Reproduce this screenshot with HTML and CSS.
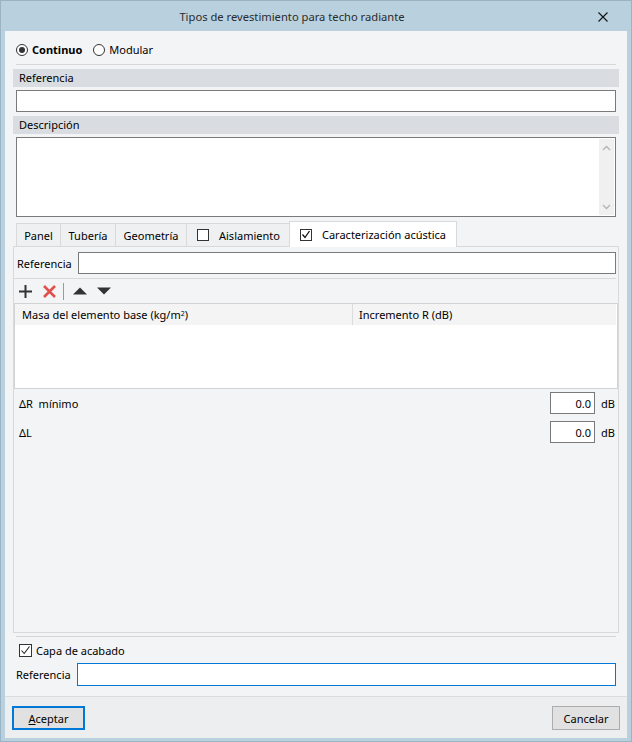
FILE: index.html
```html
<!DOCTYPE html>
<html lang="es">
<head>
<meta charset="utf-8">
<title>Tipos de revestimiento para techo radiante</title>
<link rel="stylesheet" href="styles.css">
</head>
<body>
<div class="window">
  <div class="titlebar">
    <div class="title">Tipos de revestimiento para techo radiante</div>
    <div class="close">
      <svg width="10" height="10" viewBox="0 0 10 10"><path d="M0.5 0.5L9.5 9.5M9.5 0.5L0.5 9.5" stroke="#111" stroke-width="1.1" fill="none"/></svg>
    </div>
  </div>
  <div class="content">
    <div class="main">
      <div class="radios">
        <div class="radio"><span class="radio-circle on"></span><b>Continuo</b></div>
        <div class="radio"><span class="radio-circle"></span>Modular</div>
      </div>
      <div class="sep sep-top"></div>
      <div class="band">Referencia</div>
      <div class="field field-wide"></div>
      <div class="band">Descripción</div>
      <div class="textarea">
        <div class="vscroll">
          <svg width="9" height="6" viewBox="0 0 9 6"><path d="M1 5L4.5 1.5L8 5" stroke="#b3b3b3" stroke-width="1.3" fill="none"/></svg>
          <svg width="9" height="6" viewBox="0 0 9 6"><path d="M1 1L4.5 4.5L8 1" stroke="#b3b3b3" stroke-width="1.3" fill="none"/></svg>
        </div>
      </div>
      <div class="tabs">
        <div class="tab t-panel">Panel</div>
        <div class="tab t-tuberia">Tubería</div>
        <div class="tab t-geom">Geometría</div>
        <div class="tab t-aisl"><span class="cb cb-small"></span>Aislamiento</div>
        <div class="tab active t-acus"><span class="cb cb-small">
          <svg width="10" height="10" viewBox="0 0 10 10"><path d="M1.5 4.5L4 7.5L8.5 1" stroke="#111" stroke-width="1.3" fill="none"/></svg>
        </span>Caracterización acústica</div>
      </div>
      <div class="panel">
        <div class="ref-row">
          <span class="ref-label">Referencia</span>
          <div class="field field-flex"></div>
        </div>
        <div class="sep sep-panel"></div>
        <div class="toolbar">
          <svg class="ic ic-plus" width="15" height="15" viewBox="0 0 15 15"><path d="M7.5 1V14M1 7.5H14" stroke="#333" stroke-width="2" fill="none"/></svg>
          <svg class="ic ic-del" width="15" height="15" viewBox="0 0 15 15"><path d="M2 2L13 13M13 2L2 13" stroke="#e0504d" stroke-width="2.6" fill="none"/></svg>
          <span class="tb-sep"></span>
          <svg class="ic ic-up" width="14" height="8" viewBox="0 0 14 8"><path d="M0 7.5L7 0.5L14 7.5Z" fill="#333"/></svg>
          <svg class="ic ic-down" width="14" height="8" viewBox="0 0 14 8"><path d="M0 0.5L7 7.5L14 0.5Z" fill="#333"/></svg>
        </div>
        <div class="grid">
          <div class="grid-head">
            <div class="col col-1">Masa del elemento base (kg/m<sup>2</sup>)</div>
            <div class="col col-2">Incremento R (dB)</div>
          </div>
        </div>
        <div class="val-row">
          <span class="val-label">ΔR&nbsp;&nbsp;mínimo</span>
          <div class="field field-num">0.0</div>
          <span class="unit">dB</span>
        </div>
        <div class="val-row val-row-2">
          <span class="val-label">ΔL</span>
          <div class="field field-num">0.0</div>
          <span class="unit">dB</span>
        </div>
      </div>
      <div class="sep sep-bottom"></div>
      <div class="check-row">
        <span class="cb cb-large">
          <svg width="11" height="11" viewBox="0 0 11 11"><path d="M1.5 5.5L4.2 8.5L9.5 1.5" stroke="#222" stroke-width="1.1" fill="none"/></svg>
        </span>Capa de acabado
      </div>
      <div class="ref-row ref-row-bottom">
        <span class="ref-label">Referencia</span>
        <div class="field field-flex field-focus"></div>
      </div>
    </div>
    <div class="footer">
      <div class="btn btn-default"><u>A</u>ceptar</div>
      <div class="btn">Cancelar</div>
    </div>
  </div>
</div>
</body>
</html>
```
FILE: styles.css
```css
html, body {
  margin: 0;
  padding: 0;
}
body {
  font-family: "Noto Sans", "Open Sans", sans-serif;
  font-size: 11px;
  color: #000;
}
.window {
  width: 632px;
  height: 742px;
  box-sizing: border-box;
  background: #b9d1de;
  border: 1px solid #9ab4c3;
  padding: 0 4px 3px 4px;
  display: flex;
  flex-direction: column;
}
.titlebar {
  height: 30px;
  display: flex;
  align-items: center;
  margin: 0 -4px;
}
.title {
  flex: 1;
  text-align: center;
  font-size: 11.2px;
  color: #2b2b2b;
  padding-top: 1px;
  padding-right: 2px;
}
.close {
  width: 36px;
  margin-right: 10px;
  display: flex;
  justify-content: center;
  align-items: center;
  padding-top: 2px;
}
.content {
  flex: 1;
  background: #f3f4f6;
  display: flex;
  flex-direction: column;
}
.main {
  flex: 1;
  display: flex;
  flex-direction: column;
}
.radios {
  display: flex;
  align-items: center;
  height: 17px;
  padding-top: 10px;
  padding-left: 11px;
  gap: 11px;
}
.radio {
  display: flex;
  align-items: center;
  gap: 4px;
}
.radio b {
  font-weight: 700;
}
.radio-circle {
  width: 10px;
  height: 10px;
  border: 1px solid #333;
  border-radius: 50%;
  background: #fff;
  display: flex;
  align-items: center;
  justify-content: center;
}
.radio-circle.on::after {
  content: "";
  width: 6px;
  height: 6px;
  border-radius: 50%;
  background: #333;
}
.sep {
  height: 1px;
  background: #d4d6d9;
}
.sep-top {
  margin: 6px 11px 0;
}
.band {
  margin: 4px 8px 0;
  height: 18px;
  line-height: 18px;
  background: #d9dde1;
  padding-left: 6px;
}
.field {
  box-sizing: border-box;
  background: #fff;
  border: 1px solid #7a7a7a;
}
.field-wide {
  margin: 3px 11px 0;
  height: 22px;
}
.textarea {
  margin: 3px 11px 0;
  height: 80px;
  box-sizing: border-box;
  background: #fff;
  border: 1px solid #7a7a7a;
  display: flex;
  justify-content: flex-end;
  padding: 1px;
}
.vscroll {
  width: 15px;
  background: #f0f0f0;
  display: flex;
  flex-direction: column;
  justify-content: space-between;
  align-items: center;
  padding: 6px 0 5px;
}
.tabs {
  display: flex;
  align-items: flex-end;
  height: 25px;
  margin: 4px 0 0 11px;
  position: relative;
  z-index: 1;
}
.tab {
  box-sizing: border-box;
  height: 23px;
  border: 1px solid #d9d9d9;
  border-bottom: none;
  background: #eef0f2;
  display: flex;
  align-items: center;
  justify-content: center;
  margin-right: -1px;
}
.t-panel { width: 45px; }
.t-tuberia { width: 56px; }
.t-geom { width: 72px; }
.t-aisl { width: 104px; justify-content: flex-start; padding-left: 10px; }
.t-acus { width: 168px; justify-content: flex-start; padding-left: 10px; }
.tab.active {
  height: 26px;
  background: #fff;
  margin-bottom: -1px;
}
.cb {
  box-sizing: border-box;
  border: 1px solid #333;
  background: #fff;
  display: inline-flex;
  align-items: center;
  justify-content: center;
}
.cb-small {
  width: 12px;
  height: 12px;
  margin-right: 10px;
}
.cb-large {
  width: 13px;
  height: 13px;
  margin-right: 4px;
}
.panel {
  margin: 0 8px;
  height: 387px;
  box-sizing: border-box;
  border: 1px solid #d9d9d9;
  background: #f3f4f6;
  display: flex;
  flex-direction: column;
}
.ref-row {
  display: flex;
  align-items: center;
}
.panel .ref-row {
  padding: 5px 2px 0 3px;
}
.ref-label {
  width: 61px;
  flex: none;
}
.field-flex {
  flex: 1;
  height: 22px;
}
.sep-panel {
  margin: 4px 2px 0 0;
  background: #d9d9d9;
}
.toolbar {
  height: 24px;
  display: flex;
  align-items: center;
  padding-left: 4px;
}
.ic {
  flex: none;
}
.ic-plus { margin-right: 9px; }
.ic-del { margin-right: 6px; }
.tb-sep {
  width: 1px;
  height: 17px;
  background: #9a9a9a;
  margin-right: 9px;
}
.ic-up { margin-right: 10px; }
.grid {
  margin-left: 0;
  height: 86px;
  box-sizing: border-box;
  border: 1px solid #d3d3d3;
  background: #fff;
}
.grid-head {
  display: flex;
  height: 21px;
  background: #f4f4f4;
  margin-right: 1px;
}
.col {
  display: flex;
  align-items: center;
  box-sizing: border-box;
}
.col-1 {
  width: 338px;
  padding-left: 7px;
  border-right: 1px solid #dcdcdc;
}
.col-2 {
  flex: 1;
  padding-left: 6px;
}
sup {
  font-size: 7px;
  line-height: 0;
  position: relative;
  top: -1px;
}
.val-row {
  display: flex;
  align-items: center;
  margin-top: 3px;
  padding: 0 3px 0 5px;
}
.val-row-2 {
  margin-top: 7px;
}
.val-label {
  flex: 1;
}
.field-num {
  width: 45px;
  height: 22px;
  display: flex;
  align-items: center;
  justify-content: flex-end;
  padding-right: 3px;
}
.unit {
  width: 20px;
  text-align: right;
}
.sep-bottom {
  margin: 3px 11px 0;
}
.check-row {
  display: flex;
  align-items: center;
  height: 18px;
  margin-top: 4px;
  padding-left: 14px;
}
.ref-row-bottom {
  margin: 4px 11px 0 11px;
}
.ref-row-bottom .field-flex {
  height: 23px;
}
.field-focus {
  border-color: #0078d7;
}
.footer {
  height: 42px;
  box-sizing: border-box;
  border-top: 1px solid #dadcde;
  background: #eceef0;
  display: flex;
  justify-content: space-between;
  align-items: flex-start;
  padding: 9px 7px 0 7px;
}
.btn {
  box-sizing: border-box;
  height: 24px;
  width: 68px;
  border: 1px solid #adadad;
  background: #e1e1e1;
  display: flex;
  align-items: center;
  justify-content: center;
}
.btn-default {
  width: 73px;
  border: 2px solid #0078d7;
}
```
